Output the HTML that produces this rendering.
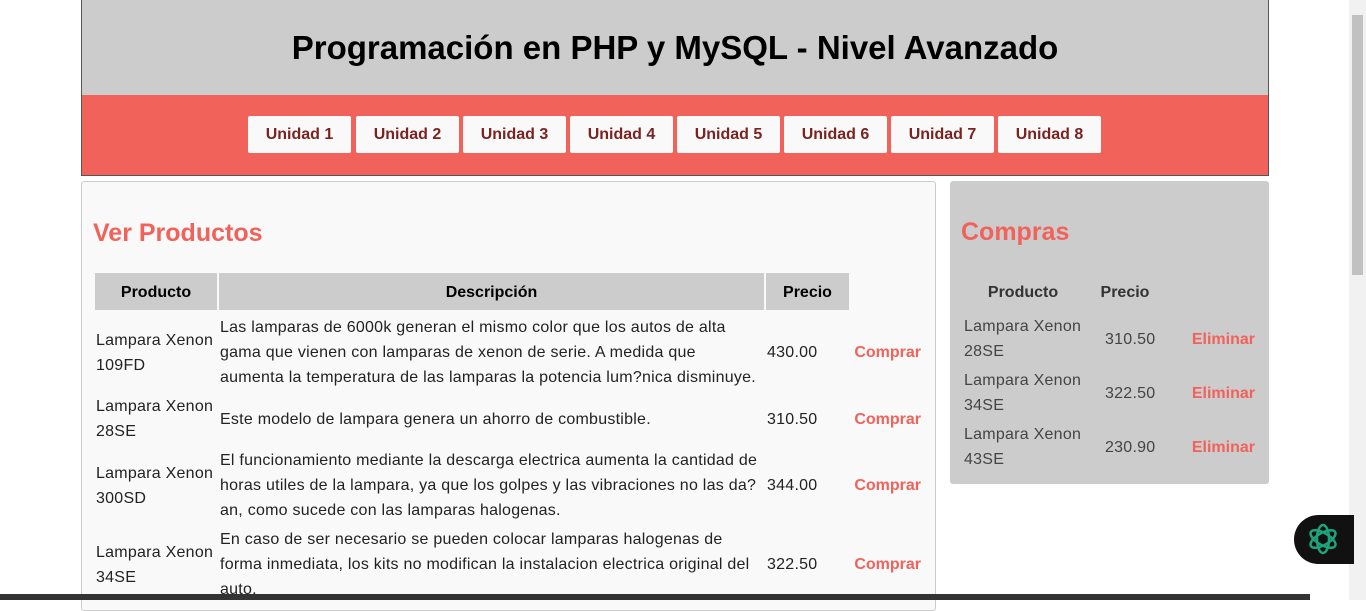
<!DOCTYPE html>
<html><head><meta charset="utf-8"><style>
*{box-sizing:border-box}
body{margin:0;background:#fff;font-family:"Liberation Sans",Arial,sans-serif;width:1366px;height:600px;overflow:hidden;position:relative}
.hdr{position:absolute;left:81px;top:0;width:1188px;height:176px;border:1px solid #555;border-top:none}
.hdr .t{height:95px;background:#ccc;text-align:center;font-size:33px;font-weight:bold;line-height:95px;color:#000}
.hdr .n{height:80px;background:#f0625a;position:relative}
.btn{position:absolute;top:21px;height:37px;width:103px;background:#f9f9f9;border-radius:2px;color:#7a2320;font-weight:bold;font-size:16px;text-align:center;line-height:37px}
.lp{position:absolute;left:81px;top:181px;width:855px;height:430px;background:#f9f9f9;border:1px solid #ccc;border-radius:3px}
.rp{position:absolute;left:950px;top:181px;width:319px;height:303px;background:#ccc;border-radius:3px}
h2{margin:0;position:absolute;font-size:25px;color:#f0625a;font-weight:bold}
table{position:absolute;border-collapse:separate;border-spacing:2px;font-size:16px;line-height:25px;color:#222}
th{background:#ccc;height:37px;font-weight:bold;color:#000;padding-top:2px}
td{padding:1px 1px;letter-spacing:0.25px}
.lp tr:nth-child(2) td{padding-top:3px}
.a{color:#f0625a !important;font-weight:bold;text-align:right;padding-right:4px;letter-spacing:0}
.rp th{background:none;color:#333;padding-top:0}
.rp td{color:#444}
</style></head><body>
<div class="hdr"><div class="t">Programación en PHP y MySQL - Nivel Avanzado</div>
<div class="n">
<div class="btn" style="left:166px">Unidad 1</div>
<div class="btn" style="left:274px">Unidad 2</div>
<div class="btn" style="left:381px">Unidad 3</div>
<div class="btn" style="left:488px">Unidad 4</div>
<div class="btn" style="left:595px">Unidad 5</div>
<div class="btn" style="left:702px">Unidad 6</div>
<div class="btn" style="left:809px">Unidad 7</div>
<div class="btn" style="left:916px">Unidad 8</div>
</div></div>
<div class="lp">
<h2 style="left:11px;top:37px">Ver Productos</h2>
<table style="left:11px;top:89px;width:834px">
<tr><th style="width:122px">Producto</th><th style="width:545px">Descripción</th><th style="width:83px">Precio</th><th style="background:none"></th></tr>
<tr><td>Lampara Xenon 109FD</td><td>Las lamparas de 6000k generan el mismo color que los autos de alta gama que vienen con lamparas de xenon de serie. A medida que aumenta la temperatura de las lamparas la potencia lum?nica disminuye.</td><td>430.00</td><td class="a">Comprar</td></tr>
<tr><td>Lampara Xenon 28SE</td><td>Este modelo de lampara genera un ahorro de combustible.</td><td>310.50</td><td class="a">Comprar</td></tr>
<tr><td>Lampara Xenon 300SD</td><td>El funcionamiento mediante la descarga electrica aumenta la cantidad de horas utiles de la lampara, ya que los golpes y las vibraciones no las da?an, como sucede con las lamparas halogenas.</td><td>344.00</td><td class="a">Comprar</td></tr>
<tr><td>Lampara Xenon 34SE</td><td>En caso de ser necesario se pueden colocar lamparas halogenas de forma inmediata, los kits no modifican la instalacion electrica original del auto.</td><td>322.50</td><td class="a">Comprar</td></tr>
</table></div>
<div class="rp">
<h2 style="left:11px;top:37px">Compras</h2>
<table style="left:11px;top:91px;width:300px">
<tr><th style="width:120px">Producto</th><th style="width:80px">Precio</th><th></th></tr>
<tr><td>Lampara Xenon 28SE</td><td style="padding-left:20px">310.50</td><td class="a">Eliminar</td></tr>
<tr><td>Lampara Xenon 34SE</td><td style="padding-left:20px">322.50</td><td class="a">Eliminar</td></tr>
<tr><td>Lampara Xenon 43SE</td><td style="padding-left:20px">230.90</td><td class="a">Eliminar</td></tr>
</table></div>
<div style="position:absolute;right:0;top:0;width:17px;height:600px;background:#f1f1f1"><div style="position:absolute;left:3px;top:15px;width:11px;height:260px;background:#c1c1c1"></div></div>
<div style="position:absolute;left:0;top:594px;width:1310px;height:6px;background:#333"></div>
<div style="position:absolute;left:1294px;top:515px;width:60px;height:49px;background:#111;border-radius:25px 0 0 25px"></div>
<svg style="position:absolute;left:1305px;top:521px" width="36" height="36" viewBox="0 0 36 36" fill="none" stroke="#1fa37a" stroke-width="2.5"><ellipse cx="18" cy="18" rx="6" ry="14"/><ellipse cx="18" cy="18" rx="6" ry="14" transform="rotate(60 18 18)"/><ellipse cx="18" cy="18" rx="6" ry="14" transform="rotate(120 18 18)"/></svg>
</body></html>
